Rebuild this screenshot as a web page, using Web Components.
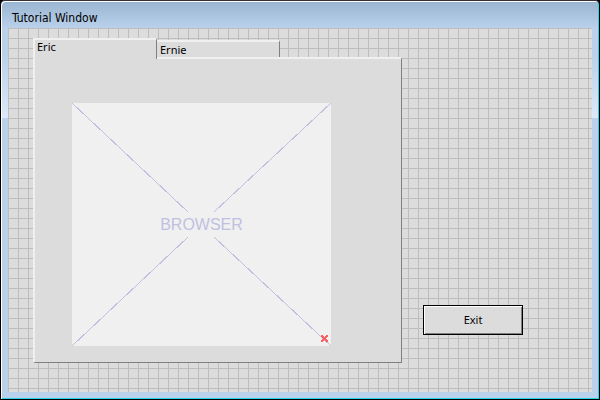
<!DOCTYPE html>
<html lang="en">
<head>
<meta charset="utf-8">
<title>Tutorial Window</title>
<style>
    html, body {
        margin: 0;
        height: 100%;
    }
    body {
        --face: #dcdcdc;
        --light: #f0f0f0;
        --shade: #808080;
        background: #000;
        color: #000;
        font: 11px/14px "Noto Sans", "DejaVu Sans Condensed", sans-serif;
    }
</style>
</head>
<body>

<app-window caption="Tutorial Window">
    <tab-control labels="Eric,Ernie">
        <browser-placeholder>BROWSER</browser-placeholder>
    </tab-control>
    <push-button>Exit</push-button>
</app-window>

<script>
class AppWindow extends HTMLElement {
    constructor() {
        super();

        const shadow = this.attachShadow({mode: 'open'});
        shadow.innerHTML = `
            <style>
                :host {
                    display: flex;
                    flex-direction: column;
                    box-sizing: border-box;
                    min-height: 100%;
                    padding: 0 6px 6px;
                    border: 1px solid;
                    border-color: #35303a #000 #000;
                    border-radius: 5px 5px 0 0;
                    box-shadow: inset 1px 1px #fff, inset -1px -1px #28d3ea;
                    /* glass frame: the caption, then the glow down both sides */
                    background:
                        linear-gradient(#99b4d1, #b9d1ea) 0 0 / 100% 27px no-repeat,
                        linear-gradient(#b9d1ea 30%, #dce9f8) 0 27px / 100% 90px no-repeat,
                        #b9d1ea;
                }
                header {
                    display: flex;
                    align-items: center;
                    height: 27px;
                    padding: 6px 5px 0;
                    box-sizing: border-box;
                    font-family: "DejaVu Sans Condensed", "DejaVu Sans", sans-serif;
                    font-size: 12px;
                }
                h1 {
                    margin: 0;
                    font: inherit;
                }
                main {
                    flex: 1;
                    display: flex;
                    align-items: flex-end;
                    align-content: flex-start;
                    flex-wrap: wrap;
                    gap: 21px;
                    margin: 0 1px 1px;
                    padding: 10px 25px;
                    background:
                        linear-gradient(#bdbdbd 1px, transparent 1px) 0 0 / 10px 10px,
                        linear-gradient(90deg, #bdbdbd 1px, transparent 1px) 0 0 / 10px 10px,
                        var(--face);
                }
            </style>
            <header><h1></h1></header>
            <main><slot></slot></main>
        `;

        shadow.querySelector('h1').textContent = this.getAttribute('caption');
    }
}

class TabControl extends HTMLElement {
    constructor() {
        super();

        const shadow = this.attachShadow({mode: 'open'});
        shadow.innerHTML = `
            <style>
                :host {
                    display: block;
                    width: 369px;
                }
                nav {
                    display: flex;
                    align-items: flex-end;
                }
                button {
                    box-sizing: border-box;
                    width: 123px;
                    height: 17px;
                    margin: 0;
                    padding: 0 3px;
                    border: solid var(--light);
                    border-width: 2px 0 0;
                    border-right: 1px solid var(--shade);
                    border-radius: 0;
                    background: var(--face);
                    color: inherit;
                    font: inherit;
                    text-align: left;
                }
                /* the open tab stands taller and covers the panel's top edge */
                button[aria-selected="true"] {
                    position: relative;
                    width: 124px;
                    height: 21px;
                    margin-bottom: -2px;
                    padding: 0 2px 6px;
                    border-left: 2px solid var(--light);
                }
                .panel {
                    box-sizing: border-box;
                    border: 2px solid var(--light);
                    border-right: 1px solid var(--shade);
                    border-bottom: 1px solid var(--shade);
                    background: var(--face);
                    padding: 44px 70px 16px 37px;
                }
            </style>
            <nav role="tablist"></nav>
            <div class="panel" role="tabpanel"><slot></slot></div>
        `;

        const list = shadow.querySelector('nav');
        this.getAttribute('labels').split(',').forEach((label, i) => {
            const tab = document.createElement('button');
            tab.type = 'button';
            tab.textContent = label;
            tab.setAttribute('role', 'tab');
            tab.setAttribute('aria-selected', i === 0);
            list.append(tab);
        });
        list.addEventListener('click', e => this.select(e.target));
    }

    select(tab) {
        if (tab.getAttribute('role') !== 'tab') {
            return;
        }
        for (const other of tab.parentNode.children) {
            other.setAttribute('aria-selected', other === tab);
        }
    }
}

class BrowserPlaceholder extends HTMLElement {
    constructor() {
        super();

        const shadow = this.attachShadow({mode: 'open'});
        shadow.innerHTML = `
            <style>
                :host {
                    display: grid;
                    place-items: center;
                    height: 243px;
                    background: #f0f0f0;
                    color: #c0c0e0;
                    font: 16px/18px "Liberation Sans", Arial, sans-serif;
                }
                svg, span {
                    grid-area: 1 / 1;
                }
                svg {
                    width: 100%;
                    height: 100%;
                }
            </style>
            <svg viewBox="0 0 259 243" preserveAspectRatio="none" shape-rendering="crispEdges" aria-hidden="true">
                <path d="M0 0L116 109M259 0L142 109M0 243L116 134M259 243L142 134" stroke="#c0c0e0" fill="none"/>
                <path d="M249 232h2v1h1v1h1v-1h1v-1h2v2h-1v1h-1v1h1v1h1v2h-2v-1h-1v-1h-1v1h-1v1h-2v-2h1v-1h1v-1h-1v-1h-1z" fill="#fb5f5f"/>
            </svg>
            <span><slot></slot></span>
        `;
    }
}

class PushButton extends HTMLElement {
    constructor() {
        super();

        const shadow = this.attachShadow({mode: 'open'});
        shadow.innerHTML = `
            <style>
                :host {
                    display: block;
                    margin-bottom: 28px;
                }
                button {
                    display: block;
                    box-sizing: border-box;
                    width: 100px;
                    height: 30px;
                    padding: 0;
                    border: 1px solid #000;
                    border-radius: 0;
                    box-shadow: inset 1px 1px #fff, inset -1px -1px var(--shade);
                    background: var(--face);
                    color: inherit;
                    font: inherit;
                }
            </style>
            <button type="button"><slot></slot></button>
        `;
    }
}

customElements.define('app-window', AppWindow);
customElements.define('tab-control', TabControl);
customElements.define('browser-placeholder', BrowserPlaceholder);
customElements.define('push-button', PushButton);
</script>
</body>
</html>
